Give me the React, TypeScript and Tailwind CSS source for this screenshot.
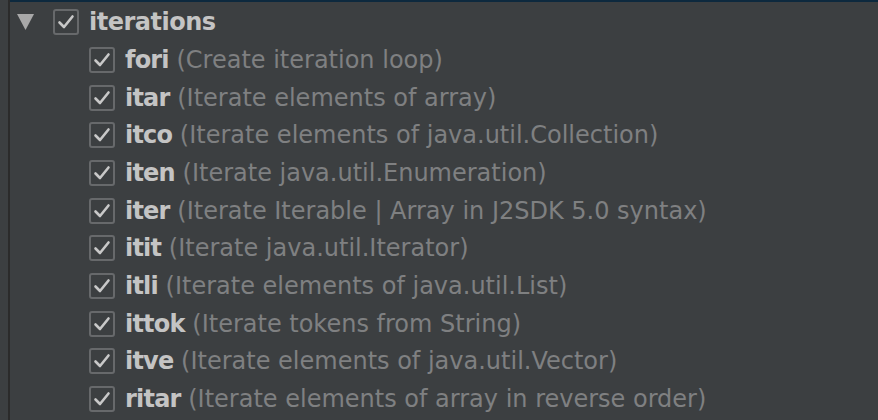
import React from "react";

const items = [
  ["fori", "Create iteration loop"],
  ["itar", "Iterate elements of array"],
  ["itco", "Iterate elements of java.util.Collection"],
  ["iten", "Iterate java.util.Enumeration"],
  ["iter", "Iterate Iterable | Array in J2SDK 5.0 syntax"],
  ["itit", "Iterate java.util.Iterator"],
  ["itli", "Iterate elements of java.util.List"],
  ["ittok", "Iterate tokens from String"],
  ["itve", "Iterate elements of java.util.Vector"],
  ["ritar", "Iterate elements of array in reverse order"],
];

const Check = () => (
  <span className="flex h-[26px] w-[26px] shrink-0 items-center justify-center rounded-[3px] border-2 border-[#67696b]">
    <svg width="18" height="16" viewBox="0 0 18 16" fill="none">
      <path d="M2.5 8.5 L7 13 L15.5 2.5" stroke="#c8c8c8" strokeWidth="2.6" strokeLinecap="round" strokeLinejoin="round" />
    </svg>
  </span>
);

const App = () => {
  return (
    <div className="flex h-[420px] w-[878px] overflow-hidden bg-[#3c3f41] font-['DejaVu_Sans',sans-serif] text-[24px]">
      <div className="w-2 shrink-0 bg-[#3c3f41]" />
      <div className="w-[2px] shrink-0 bg-[#2b2b2b]" />
      <div className="flex flex-1 flex-col">
        <div className="h-[2px] bg-[#0d293e]" />
        <div className="flex h-[39px] items-center pl-[7px]">
          <svg width="17" height="17" viewBox="0 0 17 17">
            <path d="M0 1 H17 L8.5 17 Z" fill="#a8a8a8" />
          </svg>
          <span className="ml-[19px]">
            <Check />
          </span>
          <span className="ml-[10px] font-bold tracking-[-0.5px] text-[#c4c4c4]">iterations</span>
        </div>
        {items.map(([k, d]) => (
          <div key={k} className="flex h-[37.7px] items-center pl-[79px]">
            <Check />
            <span className="ml-[10px] whitespace-nowrap">
              <span className="font-bold tracking-[-0.8px] text-[#c4c4c4]">{k}</span>{" "}
              <span className="text-[#7f8081]">({d})</span>
            </span>
          </div>
        ))}
      </div>
    </div>
  );
};

export default App;
